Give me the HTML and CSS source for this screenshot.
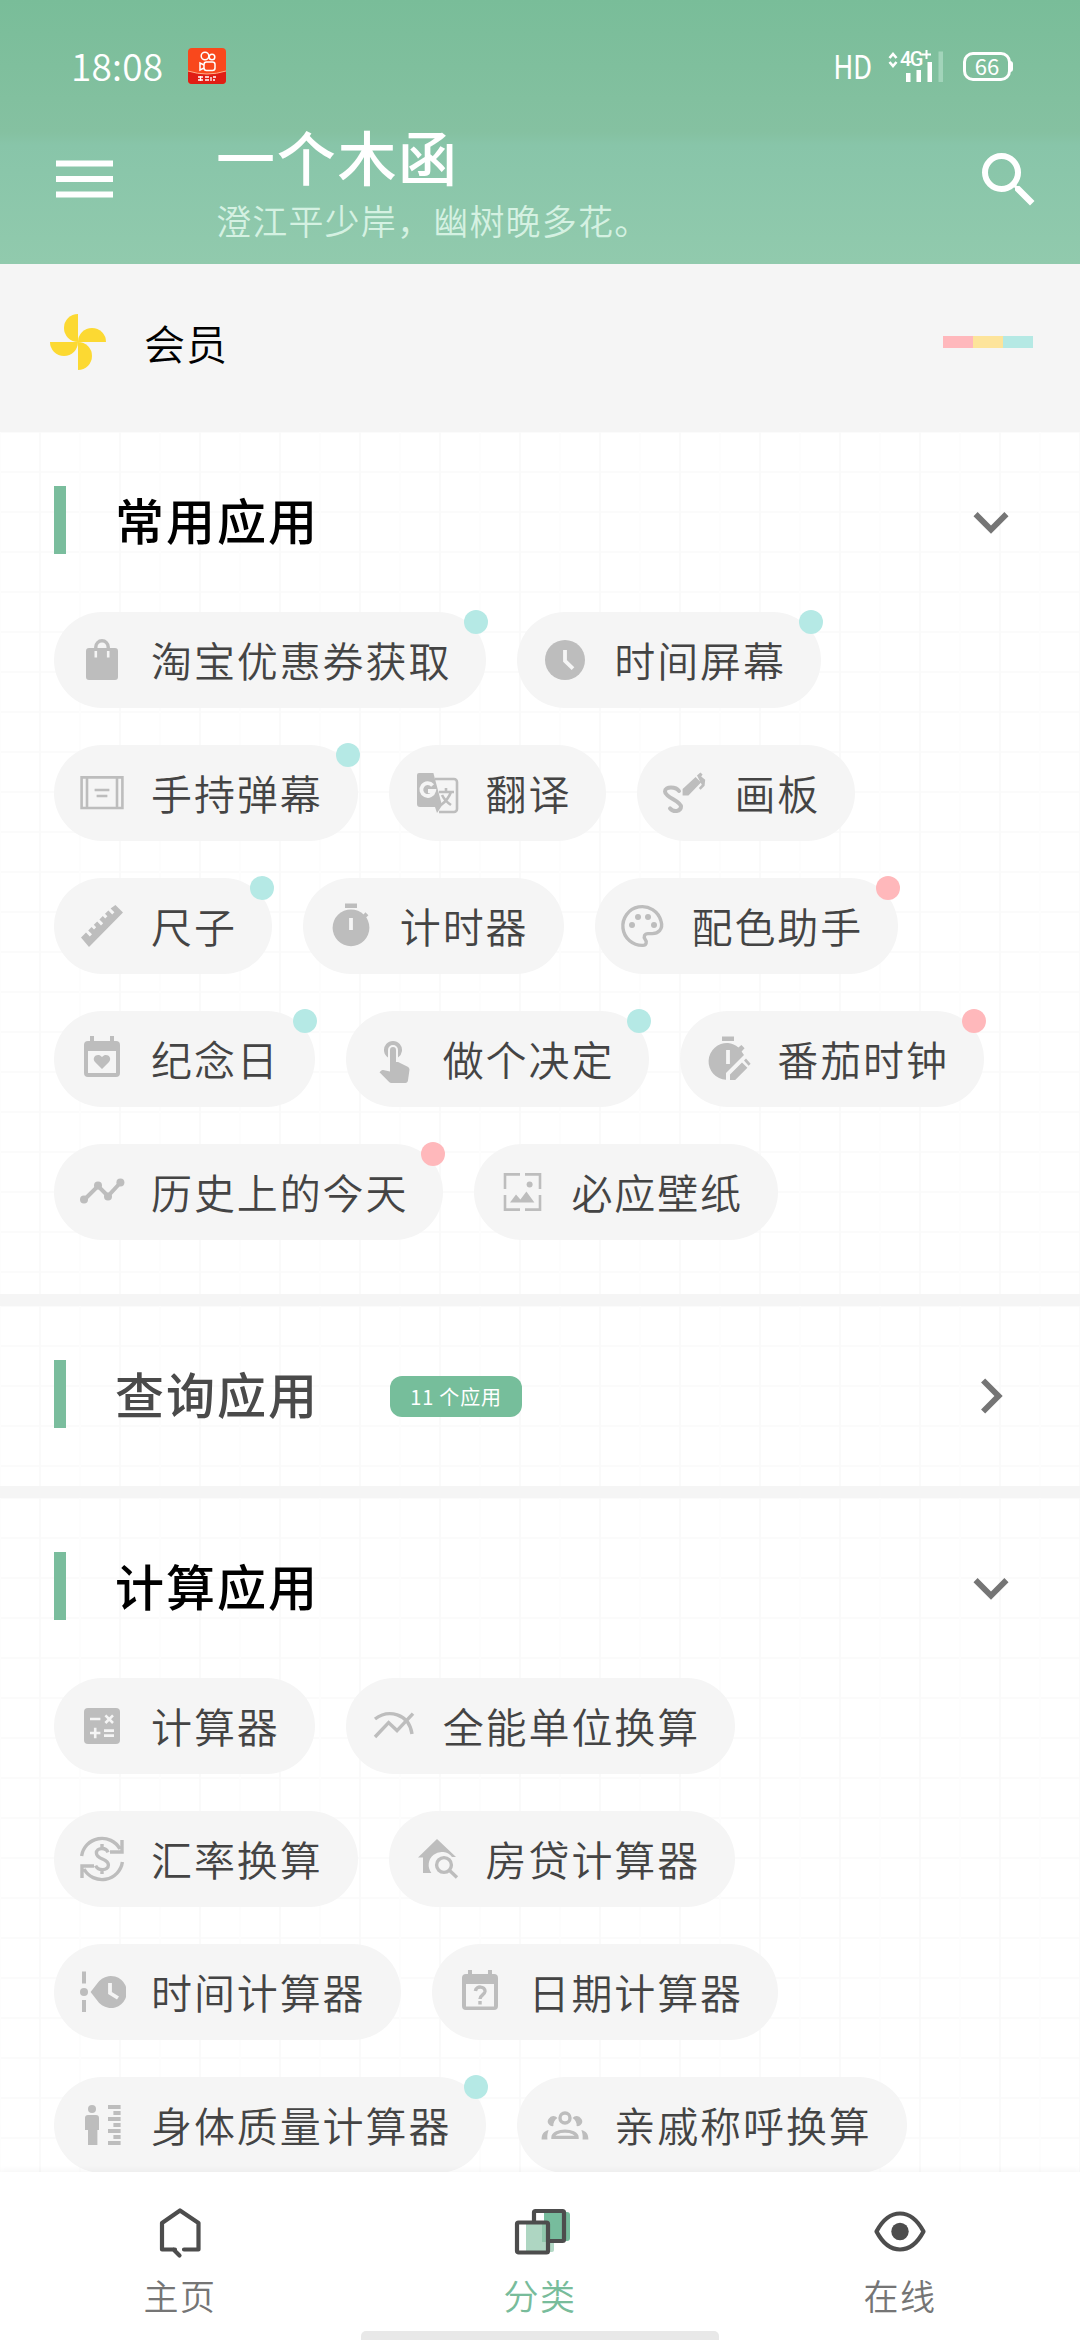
FILE: index.html
```html
<!DOCTYPE html>
<html lang="zh-CN">
<head>
<meta charset="utf-8">
<title>一个木函</title>
<link rel="stylesheet" href="styles.css">
</head>
<body>
<div class="app">
  <header class="top">
    <div class="status">
      <span class="clock">18:08</span>
      <svg class="notice" viewBox="0 0 38 36"><rect width="38" height="36" rx="4" fill="#f9481c"/><path d="M0 23q19 6 38 0v9a4 4 0 0 1-4 4H4a4 4 0 0 1-4-4z" fill="#e01e14"/><path d="M0 23q19 6 38 0" fill="none" stroke="#ffb08a" stroke-width="1"/><g fill="none" stroke="#fff" stroke-width="1.5"><circle cx="17" cy="8" r="3.800"/><circle cx="24" cy="9" r="2.800"/><rect x="16" y="14" width="11" height="8.500" rx="2.500"/><path d="M16 17l-4-2v7l4-2"/></g><path d="M10 29h5m-5 3h5m-2.500-4v5M17 29h4m-4 3h4M23 29v4m2-4h3m-3 3h2" stroke="#fff" stroke-width="1.300"/></svg>
      <span class="hd">HD</span>
      <svg class="signal" viewBox="0 0 58 34"><g fill="none" stroke="#fff" stroke-width="2.600"><path d="M2.500 9l3.500-4 3.500 4M2.500 13l3.500 4 3.500-4"/><path d="M35 5.500h9M39.500 1v9" stroke-width="2"/></g><text x="13" y="17" class="net">4G</text><path fill="#fff" d="M19 24h4.500v9H19zM29.500 21H34v12h-4.500zM40.500 13H45v20h-4.500z"/><path fill="#a2d4ba" d="M51.500 2.500H56V33h-4.500z"/></svg>
      <span class="battery">66</span>
    </div>
    <div class="bar">
      <svg class="menu" viewBox="0 0 57 38"><path d="M0 3.500h57M0 19h57M0 34.500h57" stroke="#fff" stroke-width="6"/></svg>
      <div class="titles">
        <h1>一个木函</h1>
        <p>澄江平少岸，幽树晚多花。</p>
      </div>
      <svg class="search" viewBox="0 0 24 24"><path fill="#fff" d="M15.500 14h-.79l-.28-.27A6.471 6.471 0 0 0 16 9.500 6.500 6.500 0 1 0 9.500 16c1.610 0 3.090-.59 4.230-1.570l.27.28v.79l5 4.990L20.490 19l-4.990-5zm-6 0C7.010 14 5 11.990 5 9.500S7.010 5 9.500 5 14 7.010 14 9.500 11.990 14 9.500 14z"/></svg>
    </div>
  </header>

  <section class="member">
    <svg class="fan" viewBox="0 0 56 56"><g fill="#fcd932"><path d="M28 0v28a14 14 0 0 1 0-28z"/><path d="M56 28H28a14 14 0 0 1 28 0z"/><path d="M28 56V28a14 14 0 0 1 0 28z"/><path d="M0 28h28a14 14 0 0 1-28 0z"/></g></svg>
    <span class="member-name">会员</span>
    <span class="strip"><i class="pink"></i><i class="yellow"></i><i class="aqua"></i></span>
  </section>

  <main class="content">
    <section class="group">
      <div class="head">
        <h2>常用应用</h2>
        <svg class="chevron" viewBox="0 0 24 24"><path d="M7.410 8.590 12 13.170l4.590-4.580L18 10l-6 6-6-6z"/></svg>
      </div>
      <div class="chips">
        <div class="chip aqua-dot"><svg viewBox="0 0 24 24"><path d="M5.500 6h13A1.500 1.500 0 0 1 20 7.500v13a1.500 1.500 0 0 1-1.500 1.500h-13A1.500 1.500 0 0 1 4 20.500v-13A1.500 1.500 0 0 1 5.500 6z"/><path class="line" d="M8.900 7V5.500a3.100 3.100 0 0 1 6.200 0V7"/><path class="cut slim" d="M8.900 7.500v3.200M15.100 7.500v3.200"/></svg>淘宝优惠券获取</div>
        <div class="chip aqua-dot"><svg viewBox="0 0 24 24"><circle cx="12" cy="12" r="10"/><path class="cut" d="M12 7v5.500l4 3.800"/></svg>时间屏幕</div>
        <div class="chip aqua-dot"><svg viewBox="0 0 24 24"><path class="line thin" d="M1.800 4.200h20.400v15.300H1.800zM4.500 4.200v15.300M19.500 4.200v15.300M8.300 10.500h7.400M9.300 13.500h5.400"/></svg>手持弹幕</div>
        <div class="chip"><svg viewBox="0 0 24 24"><path class="line thin" d="M11 5h9.500a1.500 1.500 0 0 1 1.500 1.500V20a1.500 1.500 0 0 1-1.500 1.500H13"/><path d="M3 2h7.200l4.300 16.200L12 22l-1-3H3.500A1.500 1.500 0 0 1 2 17.500V3a1 1 0 0 1 1-1z"/><path class="cut" d="M9.800 8.200A3.200 3.200 0 1 0 10.500 11H7.500"/><path class="line thin" d="M13 11.500h7.500M16.500 9.500v2M19 11.500q-1.500 4-5 6.500M14.500 13q1.500 3 4.500 5"/></svg>翻译</div>
        <div class="chip"><svg viewBox="0 0 24 24"><path class="line fat" d="M9 11C7.500 8.700 2 8.500 2 11.200c0 3 8 4.800 8 7.600 0 2.600-3.800 2.900-5.500.9"/><path d="M10.800 13.200V10l6.500-6 2.700 2.700-6.300 6.500zM18 3.300l1.700-1.500 1.100 1-.7 1 2 1.600-.3 3-2 2-.9-.9 1.500-1.600z"/></svg>画板</div>
        <div class="chip aqua-dot"><svg viewBox="0 0 24 24"><path d="M1.500 17.700 4 15.300l1.900 1.900 1.100-1.100-1.900-1.900 1.700-1.700 1.200 1.200 1.100-1.100-1.200-1.200 1.700-1.600 1.900 1.900 1.100-1.100-1.900-1.900 1.700-1.700 1.200 1.200 1.100-1.100-1.200-1.200 1.700-1.600 1.900 1.900 1.100-1.100-1.900-1.900L18.700 1.500l3.800 3.800L5.500 22.500z"/></svg>尺子</div>
        <div class="chip"><svg viewBox="0 0 24 24"><path d="M9 .8h6v2.200H9zM17.500 7.200l1.700-2.100 1.500 1.500-1.900 1.900z"/><circle cx="12" cy="12.900" r="9.200"/><path class="cut" d="M12 8v6"/></svg>计时器</div>
        <div class="chip pink-dot"><svg viewBox="0 0 24 24"><path class="line" d="M12 21.700a9.700 9.700 0 1 1 9-12.200c1.300 4.300-1.600 6.400-4.600 6.300h-1.900c-1.800 0-2.400 1.600-1.400 2.900 1 1.200.6 3-1.100 3z"/><circle cx="6.500" cy="11.500" r="1.500"/><circle cx="9.500" cy="7.500" r="1.500"/><circle cx="14.500" cy="7.500" r="1.500"/><circle cx="17.500" cy="11.500" r="1.500"/></svg>配色助手</div>
        <div class="chip aqua-dot"><svg viewBox="0 0 24 24"><path d="M19 3h-1V.5h-2V3H8V.5H6V3H5a2 2 0 0 0-2 2v14a2 2 0 0 0 2 2h14a2 2 0 0 0 2-2V5a2 2 0 0 0-2-2zm0 16H5V8h14z"/><path d="m12 17-3.500-3.500c-2-2.500 1.500-5 3.500-2.500 2-2.500 5.500 0 3.500 2.500z"/></svg>纪念日</div>
        <div class="chip aqua-dot"><svg viewBox="0 0 24 24"><path d="M9 11.240V7.500a2.500 2.500 0 0 1 5 0v3.740a4.500 4.500 0 1 0-5 0zm9.840 4.630-4.540-2.260c-.17-.07-.35-.11-.54-.11H13v-6a1.500 1.500 0 0 0-3 0v10.740l-3.430-.72a1.200 1.200 0 0 0-1.030.31l-.79.8 4.940 4.940c.27.27.65.44 1.060.44h6.790c.75 0 1.330-.55 1.440-1.280l.75-5.270c.1-.68-.28-1.290-.89-1.590z"/></svg>做个决定</div>
        <div class="chip pink-dot"><svg viewBox="0 0 24 24"><path d="M9 .8h6v2.200H9zM12 4a9.200 9.200 0 0 0-1 18.400V19l9-9-1.200-1.800 1.500-1.600-1.600-1.600L17.200 6.300A9 9 0 0 0 12 4zM13 22.500v-2.800l6-6 2.700 2.700-6.100 6.100zM20 12.800l1-1 2.300 2.600-1 1z"/><path class="cut" d="M12 7.500v7"/></svg>番茄时钟</div>
        <div class="chip pink-dot"><svg viewBox="0 0 24 24"><path class="line fat" d="m3 16 7-7 5 5 6.500-7"/><circle cx="3" cy="15.800" r="2"/><circle cx="10" cy="8.800" r="2"/><circle cx="15" cy="14.200" r="2"/><circle cx="21.200" cy="7.200" r="2"/></svg>历史上的今天</div>
        <div class="chip"><svg viewBox="0 0 24 24"><path class="line thin" d="M11 3.200H3.500v7.300M13.500 3.200h7.500v7.300M11 20.800H3.500v-7.300M13.500 20.800h7.500v-7.300"/><circle cx="15.800" cy="8.200" r="1.500"/><path d="m6 17.200 3-4 2.200 2.600 3-4 4 5.400z"/></svg>必应壁纸</div>
      </div>
    </section>

    <section class="group closed">
      <div class="head">
        <h2>查询应用</h2>
        <span class="count">11 个应用</span>
        <svg class="chevron" viewBox="0 0 24 24"><path d="M8.590 16.590 13.170 12 8.590 7.410 10 6l6 6-6 6z"/></svg>
      </div>
    </section>

    <section class="group">
      <div class="head">
        <h2>计算应用</h2>
        <svg class="chevron" viewBox="0 0 24 24"><path d="M7.410 8.590 12 13.170l4.590-4.580L18 10l-6 6-6-6z"/></svg>
      </div>
      <div class="chips">
        <div class="chip"><svg viewBox="0 0 24 24"><rect x="3" y="3" width="18" height="18" rx="2"/><path class="cut slim" d="M6 8.500h5.200M13.700 6.700l3.800 3.800m0-3.800-3.800 3.800M6 15.500h5.200m-2.600-2.600v5.200M13 14.300h5M13 16.800h5"/></svg>计算器</div>
        <div class="chip"><svg viewBox="0 0 24 24"><path class="line" d="m2.500 17.500 6.800-7.200 4.200 4L21.500 5.800"/><path class="line" d="M2.500 8.500C9 3.500 19.500 5.500 21 16"/></svg>全能单位换算</div>
        <div class="chip"><svg viewBox="0 0 24 24"><path class="line" d="M1.800 10.500A10.300 10.300 0 0 1 21 7M22.200 13.500A10.300 10.300 0 0 1 3 17M22 2.500v6h-6M2 21.500v-6h6"/><path class="line" d="M15 8.700C14 6 9.200 6.200 9.200 9c0 3.500 6 2.500 6 6 0 3-5.300 3-6.400.3M12 4.500V7M12 17v2.500"/></svg>汇率换算</div>
        <div class="chip"><svg viewBox="0 0 24 24"><path d="M12 2 2.500 11.200H5V19h4.200a6 6 0 0 1 10.300-8h2z"/><circle class="line" cx="15.500" cy="15" r="3.700"/><path class="line" d="m18.300 17.800 3.700 3.500"/></svg>房贷计算器</div>
        <div class="chip"><svg viewBox="0 0 24 24"><path d="M2 1.800h2v6H2zM2 16h2v6H2z"/><circle cx="3" cy="12" r="2"/><path d="m6.300 12 3.300-4.200a8 8 0 1 1 0 8.400z"/><path class="cut" d="M16 7.500v5l4 2.500"/></svg>时间计算器</div>
        <div class="chip"><svg viewBox="0 0 24 24"><path d="M19 3h-1V1h-2v2H8V1H6v2H5a2 2 0 0 0-2 2v14a2 2 0 0 0 2 2h14a2 2 0 0 0 2-2V5a2 2 0 0 0-2-2zm0 16.300H5V8h14z"/><path class="line" d="M9.700 11.500c.3-2.800 5-2.500 4.800.2-.2 1.800-2.400 1.700-2.500 3.800M12 16.500v1.800"/></svg>日期计算器</div>
        <div class="chip aqua-dot"><svg viewBox="0 0 24 24"><circle cx="7" cy="4" r="2"/><path d="M5 7h4a1.500 1.500 0 0 1 1.500 1.500v6H9.700V22H5v-7.500H3.500v-6A1.500 1.500 0 0 1 5 7zM15 2h6.300v2H15zM17.700 5h3.600v2h-3.600zM15 8h6.300v2H15zM17.700 11h3.600v2h-3.600zM15 14h6.300v2H15zM17.700 17h3.600v2h-3.600zM15 20h6.300v2H15z"/></svg>身体质量计算器</div>
        <div class="chip"><svg class="people" viewBox="0 0 24 24"><circle class="line" cx="12" cy="8.500" r="2.500"/><path class="line" d="M6 18.200c0-4.200 12-4.200 12 0z"/><path d="M8.200 8.500a4.500 4.500 0 0 0-2 4A2.300 2.300 0 0 1 4 8.700a2.500 2.500 0 0 1 4.200-.2zM15.800 8.500a4.500 4.500 0 0 1 2 4A2.300 2.300 0 0 0 20 8.700a2.500 2.500 0 0 0-4.200-.2zM3.800 14.500C1.500 15 .3 16.500.3 19.200h2.900c-.2-2 .2-3.500.6-4.700zM20.200 14.500c2.300.5 3.500 2 3.500 4.700h-2.900c.2-2-.2-3.500-.6-4.700z"/></svg>亲戚称呼换算</div>
      </div>
    </section>
  </main>

  <nav class="tabs">
    <a class="tab"><svg viewBox="0 0 60 60"><path class="ink" d="M25 50.500H12V24L30 11.500 48.500 24v26.500H34M23.500 50.500l6 6"/></svg>主页</a>
    <a class="tab active"><svg viewBox="-2 -1 60 60"><rect x="39" y="12" width="19" height="29" rx="3" fill="#77bc9d"/><rect x="22" y="11" width="30" height="30" fill="#fff"/><rect x="32" y="12" width="19" height="29" fill="#77bc9d"/><rect x="36" y="40" width="6" height="12" rx="2" fill="#b3d9c6"/><rect class="ink" x="22" y="11" width="30" height="30" rx="1.500"/><rect x="6" y="24" width="29" height="29" fill="#fff"/><rect x="14" y="24" width="21" height="28" fill="#aed6c2"/><path d="M30 24h5v18h-5z" fill="#8fc6ab"/><rect class="ink" x="5" y="22.500" width="31" height="30" rx="1.500"/></svg>分类</a>
    <a class="tab"><svg viewBox="0 0 60 60"><path class="ink" d="M6.500 32.500Q16 14.500 30 14.500t23.500 18Q44 50.500 30 50.500T6.500 32.500z"/><circle cx="30" cy="32.500" r="8.700" fill="#4d4d4d"/></svg>在线</a>
    <div class="home-line"></div>
  </nav>
</div>
</body>
</html>
```

FILE: styles.css
```css
* { box-sizing: border-box; }

body {
  margin: 0;
  background: #fff;
  font-family: "Noto Sans CJK SC", sans-serif;
}

h1, h2, p { margin: 0; }
svg { display: block; flex: none; }

.app {
  display: flex;
  flex-direction: column;
  width: 1080px;
  height: 2340px;
  overflow: hidden;
}

/* header */
.top {
  flex: none;
  height: 264px;
  background: linear-gradient(#79bd99, #85c1a1 50%, #88c5a9 55%, #91caad);
  color: #fff;
}
.status {
  display: flex;
  align-items: center;
  height: 132px;
  padding: 0 69px 0 71px;
}
.clock { width: 117px; margin-top: -3px; font-size: 37px; letter-spacing: 0.2px; font-weight: 350; }
.notice { width: 38px; height: 36px; }
.hd { margin: -2px 0 0 auto; font-size: 33px; letter-spacing: -0.5px; transform: scaleX(0.84); transform-origin: right; }
.signal { width: 58px; height: 34px; margin-left: 15px; }
.net { fill: #fff; font: 500 20px Roboto, sans-serif; letter-spacing: -1.5px; }
.battery {
  position: relative;
  width: 48px;
  height: 29px;
  margin-left: 18px;
  border: 3px solid #fff;
  border-radius: 10px;
  font-size: 22px;
  line-height: 21px;
  text-align: center;
}
.battery::after {
  content: "";
  position: absolute;
  right: -5px;
  top: 6px;
  width: 3px;
  height: 11px;
  border-radius: 0 3px 3px 0;
  background: #fff;
}
.bar { display: flex; height: 132px; padding: 0 35px 0 56px; }
.menu { width: 57px; height: 38px; margin-top: 28px; }
.titles { flex: 1; margin-top: -5px; padding-left: 103px; }
.titles h1 { font-size: 59px; line-height: 58px; letter-spacing: 1.7px; font-weight: 500; }
.titles p { margin-top: 15px; font-size: 35px; line-height: 40px; letter-spacing: 1.2px; font-weight: 350; color: #d5f1e2; }
.search { width: 72px; height: 72px; margin-top: 12px; }

/* membership row */
.member {
  display: flex;
  flex: none;
  align-items: center;
  height: 168px;
  padding: 0 47px 12px 50px;
  background: #f5f5f5;
}
.fan { width: 56px; height: 56px; }
.member-name { margin: -1px 0 0 38px; font-size: 41px; letter-spacing: 1px; font-weight: 350; color: #000; }
.strip { display: flex; margin-left: auto; }
.strip i { width: 30px; height: 12px; }
.pink { background: #ffb8bc; }
.yellow { background: #fde49b; }
.aqua { background: #b5e9e4; }

/* groups */
.content { flex: 1; min-height: 0; overflow: hidden; }
.group {
  padding: 54px 53px 0 54px;
  border-bottom: 12px solid #f5f5f5;
  background:
    linear-gradient(90deg, #fafafa 2px, transparent 2px) 39px 0 / 80px 100%,
    linear-gradient(90deg, #fdfdfd 2px, transparent 2px) 79px 0 / 80px 100%,
    linear-gradient(#fbfbfb 2px, transparent 2px) 0 39px / 100% 40px,
    #fff;
}
.head { display: flex; align-items: center; height: 68px; margin-bottom: 58px; }
.head::before { content: ""; width: 12px; height: 68px; background: #7abd9d; }
.head h2 { margin: -2px 0 0 49px; font-size: 49px; line-height: 68px; letter-spacing: 2px; font-weight: 500; color: #000; }
.closed h2 { color: #4a4a4a; }
.closed .head { margin-bottom: 0; }
.closed { padding-bottom: 58px; }
.count {
  width: 132px;
  height: 41px;
  margin: 4px 0 0 71px;
  border-radius: 12px;
  background: #76be9b;
  color: #fff;
  font-size: 20px;
  line-height: 42px;
  letter-spacing: 0.8px;
  text-align: center;
}
.chevron { width: 70px; height: 70px; margin: 4px 1px 0 auto; fill: #757575; }
.chips { display: flex; flex-wrap: wrap; gap: 37px 31px; padding-bottom: 54px; }
.chip {
  position: relative;
  display: flex;
  align-items: center;
  height: 96px;
  padding: 0 35px 2px 24px;
  border-radius: 48px;
  background: #f5f5f5;
  color: #444;
  font-size: 41px;
  letter-spacing: 1.9px;
  font-weight: 350;
  white-space: nowrap;
}
.chip svg { width: 48px; height: 48px; margin: 2px 25px 0 0; fill: #bdbdbd; }
.aqua-dot::after, .pink-dot::after {
  content: "";
  position: absolute;
  top: -2px;
  right: -2px;
  width: 24px;
  height: 24px;
  border-radius: 50%;
  background: #b5e9e5;
}
.pink-dot::after { background: #ffb8bb; }
.line { fill: none; stroke: #bdbdbd; stroke-width: 1.7; }
.line.thin { stroke-width: 1.3; }
.line.fat { stroke-width: 2; stroke-linecap: round; }
.cut { fill: none; stroke: #f5f5f5; stroke-width: 1.9; }
.cut.slim { stroke-width: 1.3; }
.chip .people { overflow: visible; }

/* bottom tabs */
.tabs {
  position: relative;
  display: grid;
  grid-template-columns: repeat(3, 1fr);
  flex: none;
  height: 168px;
  background: #fff;
  box-shadow: 0 -2px 6px rgba(0, 0, 0, 0.04);
}
.tab {
  display: flex;
  flex-direction: column;
  align-items: center;
  padding-top: 27px;
  color: #757575;
  font-size: 35px;
  line-height: 40px;
  letter-spacing: 1.5px;
  font-weight: 350;
}
.tab svg { width: 60px; height: 60px; margin-bottom: 16px; }
.active { color: #78bc9b; }
.ink { fill: none; stroke: #4d4d4d; stroke-width: 4.2; stroke-linejoin: round; stroke-linecap: round; }
.home-line {
  position: absolute;
  left: 361px;
  bottom: 0;
  width: 358px;
  height: 9px;
  border-radius: 5px 5px 0 0;
  background: #e8e8e8;
}
```
